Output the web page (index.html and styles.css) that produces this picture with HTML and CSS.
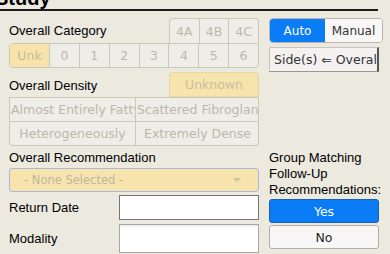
FILE: index.html
```html
<!DOCTYPE html>
<html>
<head>
<meta charset="utf-8">
<link rel="stylesheet" href="styles.css">
</head>
<body>
<div class="header"><span class="title">Study</span></div>
<div class="main">
  <div class="left">
    <div class="row cat-top">
      <span class="label">Overall Category</span>
      <div class="seg seg-top">
        <div class="cell">4A</div><div class="cell">4B</div><div class="cell">4C</div>
      </div>
    </div>
    <div class="seg seg-cat">
      <div class="cell unk sel">Unk</div><div class="cell">0</div><div class="cell">1</div><div class="cell">2</div><div class="cell">3</div><div class="cell">4</div><div class="cell">5</div><div class="cell">6</div>
    </div>
    <div class="row dens-head">
      <span class="label">Overall Density</span>
      <div class="unknown">Unknown</div>
    </div>
    <div class="dens-grid">
      <div class="dcell">Almost Entirely Fatty</div>
      <div class="dcell">Scattered Fibroglandular</div>
      <div class="dcell">Heterogeneously</div>
      <div class="dcell">Extremely Dense</div>
    </div>
    <div class="label rec-label">Overall Recommendation</div>
    <div class="select">
      <span>- None Selected -</span>
      <span class="arrow"></span>
    </div>
    <div class="row field ret">
      <span class="label">Return Date</span>
      <div class="input input-dark"></div>
    </div>
    <div class="row field mod">
      <span class="label">Modality</span>
      <div class="input input-light"></div>
    </div>
  </div>
  <div class="right">
    <div class="toggle">
      <div class="tbtn on">Auto</div>
      <div class="tbtn">Manual</div>
    </div>
    <div class="side">Side(s) ⇐ Overall</div>
    <div class="group label">Group Matching Follow-Up Recommendations:</div>
    <div class="yn yes">Yes</div>
    <div class="yn no">No</div>
  </div>
</div>
</body>
</html>
```
FILE: styles.css
```css
html, body {
  margin: 0;
  padding: 0;
  background: #ece9df;
  width: 390px;
  height: 254px;
  overflow: hidden;
}
body {
  font-family: "Liberation Sans", Arial, sans-serif;
  color: #000;
}
.header {
  width: 378px;
  height: 9px;
  overflow: hidden;
  border-bottom: 2px solid #1c1c1c;
}
.title {
  display: block;
  font-size: 20px;
  font-weight: bold;
  line-height: 20px;
  margin-top: -12px;
  margin-left: -5px;
}
.main {
  display: flex;
  padding-left: 9px;
  margin-top: 7px;
}
.left {
  width: 250px;
  display: flex;
  flex-direction: column;
}
.right {
  width: 114px;
  margin-left: 10px;
  display: flex;
  flex-direction: column;
}
.label {
  font-size: 13px;
  line-height: 16px;
}
.row {
  display: flex;
  align-items: center;
  justify-content: space-between;
}
.cat-top {
  height: 25px;
  align-items: flex-end;
}
.cat-top .label {
  align-self: center;
}
.seg {
  display: flex;
  box-sizing: border-box;
  border: 1px solid #cdc7ba;
  background: #efede7;
  font-family: "DejaVu Sans", sans-serif;
  font-size: 12.5px;
  color: #bdb7ab;
}
.seg-top {
  width: 90px;
  height: 25px;
  border-radius: 4px 4px 0 0;
  border-bottom: none;
}
.seg-cat {
  width: 250px;
  height: 25px;
  border-radius: 4px 0 4px 4px;
  overflow: hidden;
}
.cell {
  flex: 1;
  display: flex;
  align-items: center;
  justify-content: center;
  border-left: 1px solid #cdc7ba;
}
.cell:first-child {
  border-left: none;
}
.cell.unk {
  flex: 0 0 39px;
}
.cell.sel {
  background: #f7e4ac;
  color: #c7bc9c;
}
.dens-head {
  margin-top: 4px;
  height: 25px;
}
.dens-head .label {
  margin-top: 3px;
}
.unknown {
  box-sizing: border-box;
  width: 90px;
  height: 25px;
  background: #f7e4ac;
  border: 1px solid #e6d7a6;
  border-radius: 4px 4px 0 0;
  display: flex;
  align-items: center;
  justify-content: center;
  font-family: "DejaVu Sans", sans-serif;
  font-size: 12.5px;
  color: #c9bf9f;
}
.dens-grid {
  box-sizing: border-box;
  width: 250px;
  display: grid;
  grid-template-columns: 125px 124px;
  grid-auto-rows: 24px;
  border: 1px solid #cdc7ba;
  border-top: none;
  border-radius: 0 0 4px 4px;
  background: #efede7;
  font-family: "DejaVu Sans", sans-serif;
  font-size: 12.5px;
  color: #bdb7ab;
  overflow: hidden;
}
.dcell {
  box-sizing: border-box;
  border-top: 1px solid #cdc7ba;
  white-space: nowrap;
  overflow: hidden;
  text-align: center;
  line-height: 23px;
  padding: 0 1px;
}
.dcell:nth-child(2n) {
  border-left: 1px solid #cdc7ba;
}
.rec-label {
  margin-top: 4px;
}
.select {
  margin-top: 2px;
  box-sizing: border-box;
  height: 24px;
  width: 250px;
  background: #f7e4ac;
  border: 1px solid #a9b6e2;
  border-radius: 3px;
  display: flex;
  align-items: center;
  justify-content: space-between;
  padding: 0 17px 0 14px;
  font-family: "DejaVu Sans", sans-serif;
  font-size: 11.5px;
  color: #bcb6a4;
}
.arrow {
  width: 0;
  height: 0;
  border-left: 4px solid transparent;
  border-right: 4px solid transparent;
  border-top: 4px solid #cfc6aa;
}
.field .input {
  box-sizing: border-box;
  width: 140px;
  background: #fff;
}
.ret {
  margin-top: 3px;
}
.ret .input {
  height: 25px;
  border: 1px solid #767676;
}
.mod {
  margin-top: 4px;
}
.mod .input {
  height: 29px;
  border: 1px solid #aaa6a6;
  box-shadow: inset 0 3px 3px -2px #e6e4e4;
}
.toggle {
  display: flex;
  box-sizing: border-box;
  height: 25px;
  width: 114px;
  border: 1px solid #b9b5ae;
  border-radius: 4px;
  overflow: hidden;
  font-family: "DejaVu Sans", sans-serif;
  font-size: 12px;
}
.tbtn {
  display: flex;
  align-items: center;
  justify-content: center;
  background: #f8f7f5;
  color: #333;
  flex: 1;
}
.tbtn.on {
  flex: 0 0 55px;
  background: #0a7cf5;
  color: #fff;
}
.side {
  margin-top: 4px;
  box-sizing: border-box;
  width: 110px;
  height: 25px;
  background: #f6f1f1;
  border: 1px solid #c9c4c4;
  border-right: 2px solid #555;
  border-bottom: 1px solid #9a9696;
  white-space: nowrap;
  overflow: hidden;
  font-family: "DejaVu Sans", sans-serif;
  font-size: 12.5px;
  line-height: 23px;
  color: #333;
  padding-left: 4px;
}
.group {
  margin-top: 78px;
}
.yn {
  box-sizing: border-box;
  width: 110px;
  height: 24px;
  border-radius: 3px;
  display: flex;
  align-items: center;
  justify-content: center;
  font-family: "DejaVu Sans", sans-serif;
  font-size: 12.5px;
}
.yes {
  margin-top: 1px;
  background: #0a7cf5;
  border: 1px solid #1f5fb0;
  color: #fff;
}
.no {
  margin-top: 2px;
  background: #f8f7f5;
  border: 1px solid #b1aeaa;
  color: #222;
}
```
